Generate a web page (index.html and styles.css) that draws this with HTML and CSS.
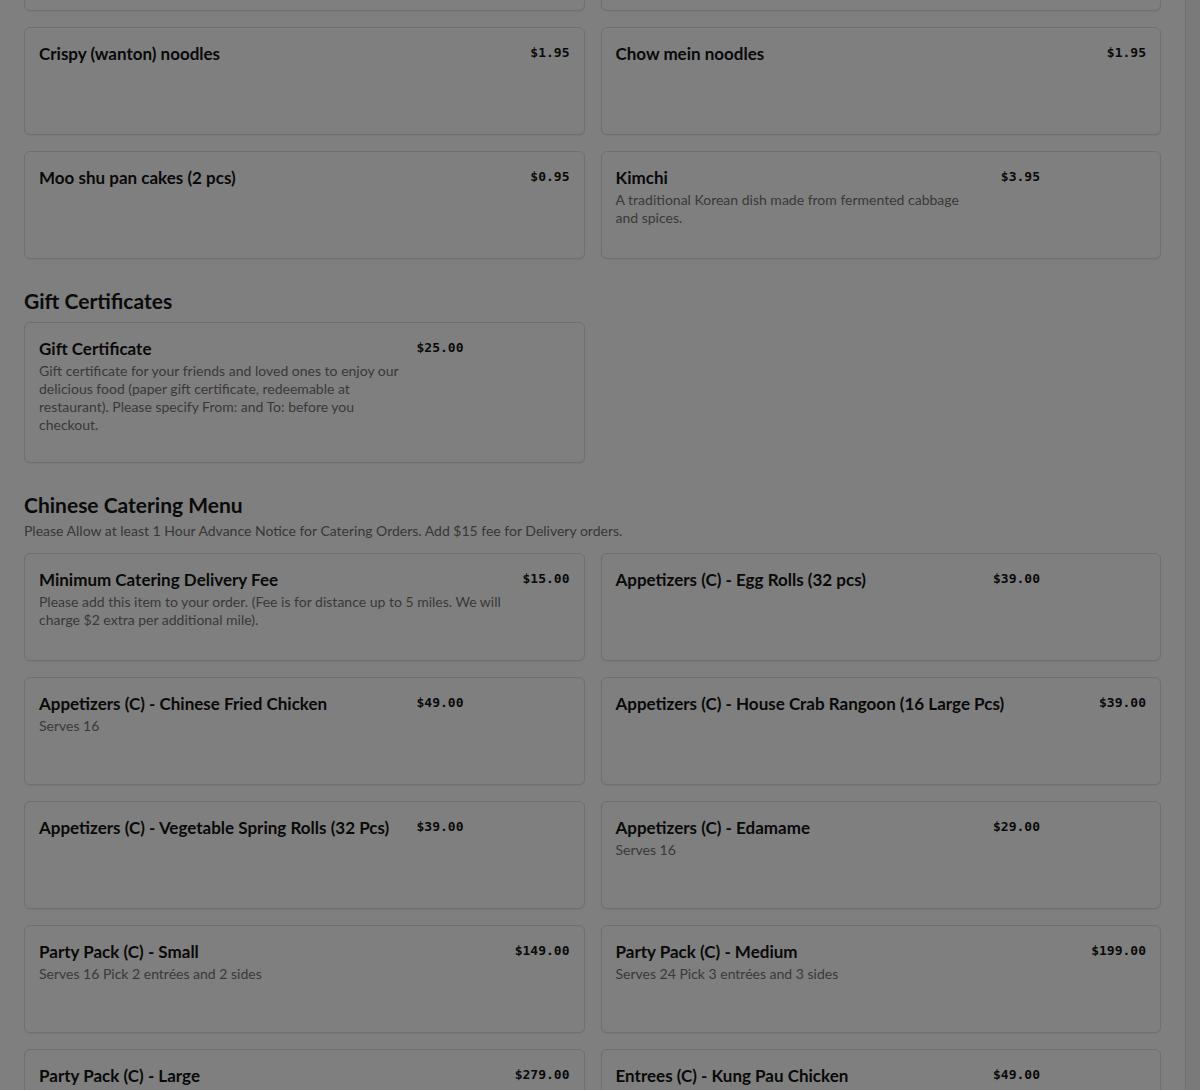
FILE: index.html
```html
<!DOCTYPE html>
<html lang="en">
<head>
<meta charset="utf-8">
<title>Menu</title>
<link rel="stylesheet" href="styles.css">
</head>
<body>
<div class="app">
  <main class="main">
    <div class="content">
      <section class="section section-cont">
        <div class="grid">
          <div class="card"></div>
          <div class="card"></div>
          <div class="card"><div class="info"><div class="title">Crispy (wanton) noodles</div></div><div class="price">$1.95</div></div>
          <div class="card"><div class="info"><div class="title">Chow mein noodles</div></div><div class="price">$1.95</div></div>
          <div class="card"><div class="info"><div class="title">Moo shu pan cakes (2 pcs)</div></div><div class="price">$0.95</div></div>
          <div class="card"><div class="info"><div class="title">Kimchi</div><div class="desc">A traditional Korean dish made from fermented cabbage and&nbsp;spices.</div></div><div class="price">$3.95</div><div class="thumb"></div></div>
        </div>
      </section>

      <section class="section">
        <h2 class="section-title">Gift Certificates</h2>
        <div class="grid">
          <div class="card"><div class="info"><div class="title">Gift Certificate</div><div class="desc">Gift certificate for your friends and loved ones to enjoy our delicious food (paper gift certificate, redeemable at restaurant). Please specify From: and To: before you checkout.</div></div><div class="price">$25.00</div><div class="thumb"></div></div>
        </div>
      </section>

      <section class="section">
        <h2 class="section-title">Chinese Catering Menu</h2>
        <p class="section-desc">Please Allow at least 1 Hour Advance Notice for Catering Orders. Add $15 fee for Delivery orders.</p>
        <div class="grid">
          <div class="card"><div class="info"><div class="title">Minimum Catering Delivery Fee</div><div class="desc">Please add this item to your order. (Fee is for distance up to 5 miles. We will charge $2 extra per additional mile).</div></div><div class="price">$15.00</div></div>
          <div class="card"><div class="info"><div class="title">Appetizers (C) - Egg Rolls (32 pcs)</div></div><div class="price">$39.00</div><div class="thumb"></div></div>
          <div class="card"><div class="info"><div class="title">Appetizers (C) - Chinese Fried Chicken</div><div class="desc">Serves 16</div></div><div class="price">$49.00</div><div class="thumb"></div></div>
          <div class="card"><div class="info"><div class="title">Appetizers (C) - House Crab Rangoon (16 Large Pcs)</div></div><div class="price">$39.00</div></div>
          <div class="card"><div class="info"><div class="title">Appetizers (C) - Vegetable Spring Rolls (32 Pcs)</div></div><div class="price">$39.00</div><div class="thumb"></div></div>
          <div class="card"><div class="info"><div class="title">Appetizers (C) - Edamame</div><div class="desc">Serves 16</div></div><div class="price">$29.00</div><div class="thumb"></div></div>
          <div class="card"><div class="info"><div class="title">Party Pack (C) - Small</div><div class="desc">Serves 16 Pick 2 entrées and 2 sides</div></div><div class="price">$149.00</div></div>
          <div class="card"><div class="info"><div class="title">Party Pack (C) - Medium</div><div class="desc">Serves 24 Pick 3 entrées and 3 sides</div></div><div class="price">$199.00</div></div>
          <div class="card"><div class="info"><div class="title">Party Pack (C) - Large</div></div><div class="price">$279.00</div></div>
          <div class="card"><div class="info"><div class="title">Entrees (C) - Kung Pau Chicken</div></div><div class="price">$49.00</div><div class="thumb"></div></div>
        </div>
      </section>
    </div>
  </main>
  <aside class="scrollbar"></aside>
</div>
<div class="overlay"></div>
</body>
</html>
```

FILE: styles.css
```css
* { box-sizing: border-box; }

html, body {
  margin: 0;
  padding: 0;
  height: 100%;
  overflow: hidden;
  background: #ffffff;
}

body {
  font-family: Lato, "Noto Sans", "Open Sans", sans-serif;
  color: #161616;
}

.app {
  display: flex;
  height: 1090px;
  overflow: hidden;
}

.main {
  flex: 1;
  min-width: 0;
  overflow: hidden;
}

.content {
  padding: 0 24px;
  margin-top: -97px;
}

.section {
  margin-bottom: 28px;
}

.section-title {
  margin: 0 0 7px;
  font-size: 21px;
  line-height: 28px;
  font-weight: 700;
  color: #141414;
}

.section-desc {
  margin: -5px 0 12px;
  font-size: 14px;
  line-height: 20px;
  color: #6f6f6f;
}

.grid {
  display: grid;
  grid-template-columns: 1fr 1fr;
  gap: 16px;
  align-items: start;
}

.card {
  display: flex;
  align-items: flex-start;
  min-height: 108px;
  padding: 14px 14px 28px;
  background: #ffffff;
  border: 1px solid #dedede;
  border-radius: 6px;
  box-shadow: 0 1px 2px rgba(0, 0, 0, 0.06);
}

.info {
  flex: 1;
  min-width: 0;
}

.title {
  font-size: 17px;
  line-height: 24px;
  font-weight: 700;
  color: #121212;
}

.desc {
  margin-top: 1px;
  font-size: 14px;
  line-height: 18px;
  color: #737373;
}

.price {
  flex-shrink: 0;
  margin-top: 1px;
  margin-left: 12px;
  font-family: "DejaVu Sans Mono", "Liberation Mono", monospace;
  font-size: 13px;
  line-height: 20px;
  font-weight: 700;
  color: #141414;
  white-space: nowrap;
}

.thumb {
  flex-shrink: 0;
  width: 94px;
  margin-left: 12px;
}

.scrollbar {
  flex: 0 0 15px;
  background: #f4f4f4;
  border-left: 1px solid #dcdcdc;
}

.overlay {
  position: fixed;
  inset: 0;
  background: rgba(0, 0, 0, 0.5);
}
```
